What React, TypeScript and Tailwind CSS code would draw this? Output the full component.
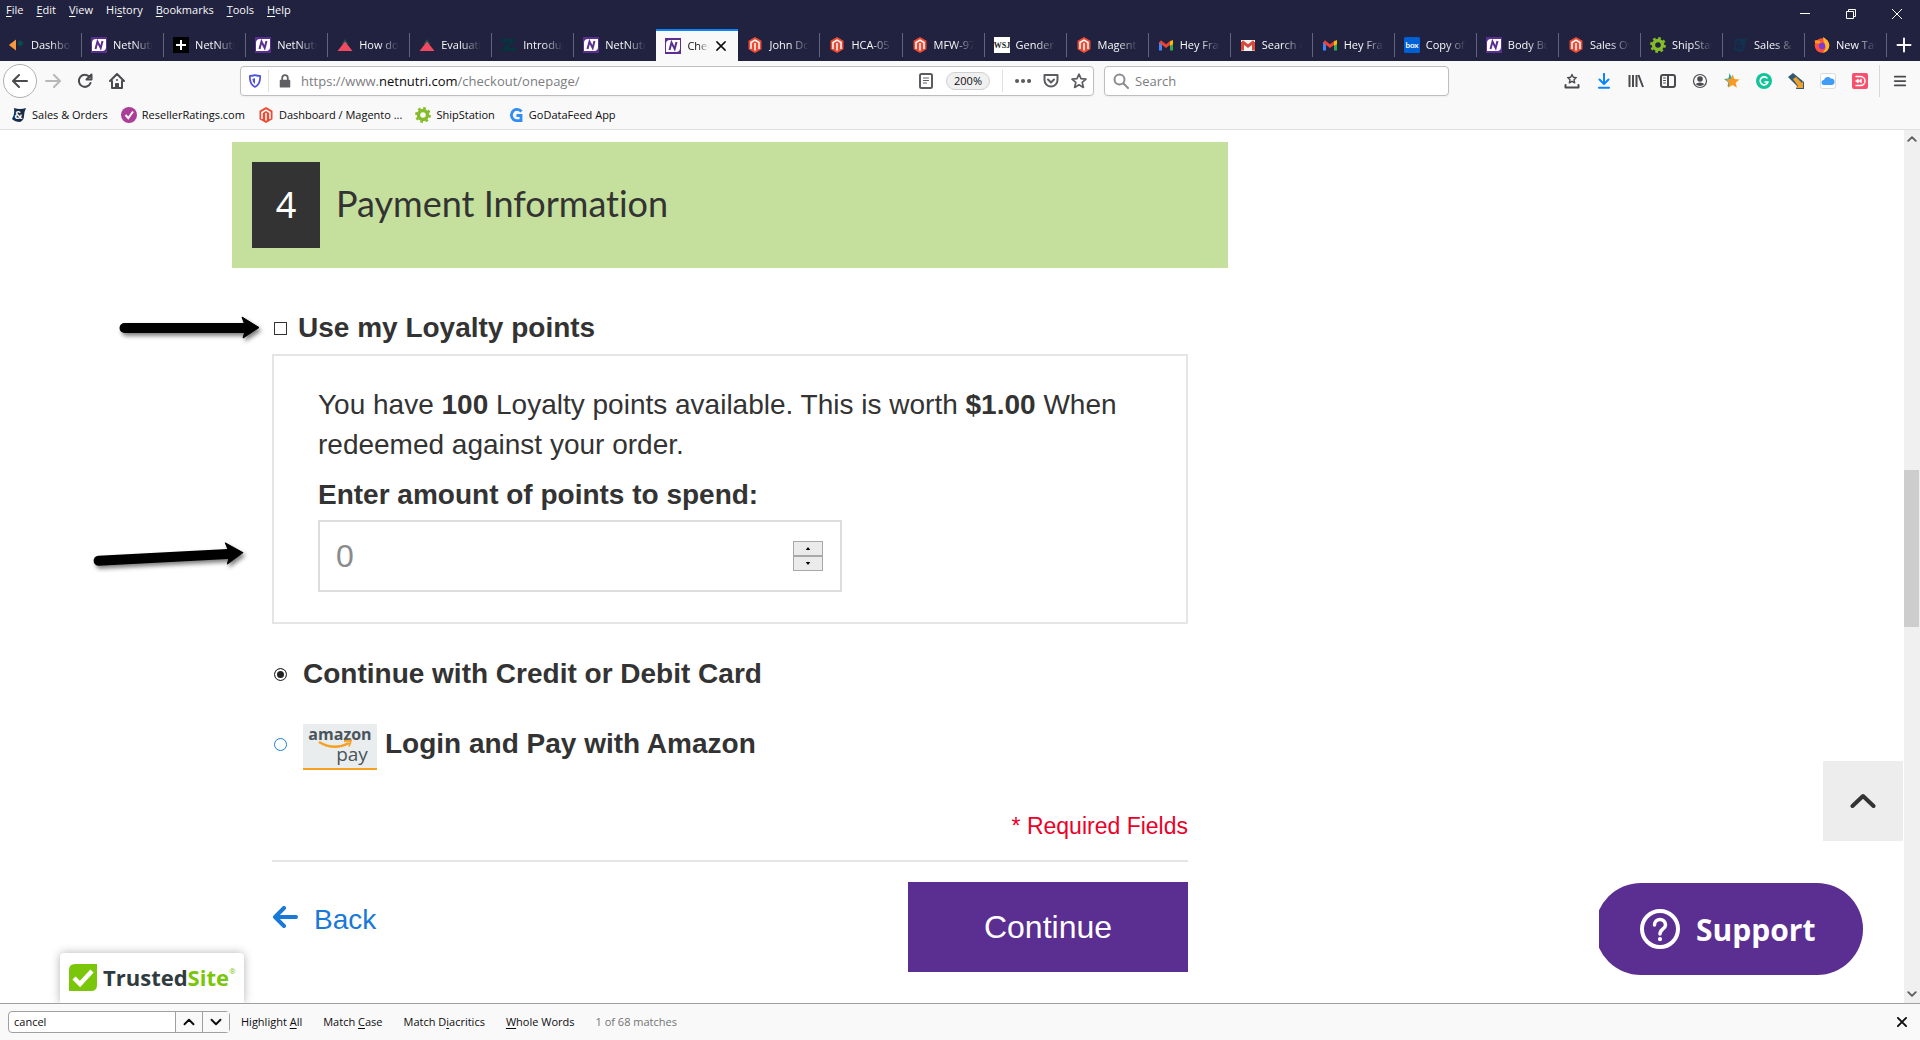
import { useState } from 'react'
import type { ReactNode } from 'react'
import clsx from 'clsx'

type IconName =
  | 'zoho' | 'net' | 'plus' | 'tri' | 'zendesk' | 'magento' | 'wsj' | 'gmail' | 'gmailOld'
  | 'box' | 'gear' | 'amp' | 'ampDim' | 'firefox' | 'check' | 'gdf'

const TABS: { icon: IconName; title: string }[] = [
  { icon: 'zoho', title: 'Dashboard' },
  { icon: 'net', title: 'NetNutri' },
  { icon: 'plus', title: 'NetNutri' },
  { icon: 'net', title: 'NetNutri' },
  { icon: 'tri', title: 'How do I' },
  { icon: 'tri', title: 'Evaluation' },
  { icon: 'zendesk', title: 'Introducing' },
  { icon: 'net', title: 'NetNutri' },
  { icon: 'net', title: 'Checkout' },
  { icon: 'magento', title: 'John Doe' },
  { icon: 'magento', title: 'HCA-05' },
  { icon: 'magento', title: 'MFW-97' },
  { icon: 'wsj', title: 'Gender-' },
  { icon: 'magento', title: 'Magento' },
  { icon: 'gmail', title: 'Hey Frank' },
  { icon: 'gmailOld', title: 'Search results' },
  { icon: 'gmail', title: 'Hey Frank' },
  { icon: 'box', title: 'Copy of' },
  { icon: 'net', title: 'Body Building' },
  { icon: 'magento', title: 'Sales Overview' },
  { icon: 'gear', title: 'ShipStation' },
  { icon: 'ampDim', title: 'Sales & Orders' },
  { icon: 'firefox', title: 'New Tab' },
]
const ACTIVE_TAB = 8

// [text before, access key, text after]
const MENUS = [
  ['', 'F', 'ile'],
  ['', 'E', 'dit'],
  ['', 'V', 'iew'],
  ['Hi', 's', 'tory'],
  ['', 'B', 'ookmarks'],
  ['', 'T', 'ools'],
  ['', 'H', 'elp'],
]

const BOOKMARKS: { icon: IconName; title: string }[] = [
  { icon: 'amp', title: 'Sales & Orders' },
  { icon: 'check', title: 'ResellerRatings.com' },
  { icon: 'magento', title: 'Dashboard / Magento ...' },
  { icon: 'gear', title: 'ShipStation' },
  { icon: 'gdf', title: 'GoDataFeed App' },
]

const FIND_OPTIONS = [
  ['Highlight ', 'A', 'll'],
  ['Match ', 'C', 'ase'],
  ['Match D', 'i', 'acritics'],
  ['', 'W', 'hole Words'],
]

function SiteIcon({ name }: { name: IconName }) {
  return (
    <svg viewBox="0 0 16 16" className="size-4 shrink-0" aria-hidden="true">
      {name === 'zoho' && (
        <>
          <path d="M7 2.500v11L.5 8.600Q0 8 .5 7.400z" fill="#f79a3e" />
          <path d="M9 4.500q2-2 4 0l1.500 2-3 3L9 8z" fill="#0b4a4b" />
        </>
      )}
      {name === 'net' && (
        <>
          <rect width="16" height="16" fill="#5b2e91" />
          <path d="M5 2h10v8q0 4-4 4H1V6q0-4 4-4z" fill="#fff" />
          <path d="M4.500 12L6.500 4.500l3.200 6.500L11.500 4" fill="none" stroke="#5b2e91" strokeWidth="2" />
        </>
      )}
      {name === 'plus' && (
        <>
          <rect width="16" height="16" fill="#000" />
          <path d="M8 3v10M3 8h10" stroke="#fff" strokeWidth="2" />
        </>
      )}
      {name === 'tri' && (
        <>
          <path d="M8 2l3.500 5H4.500z" fill="#1b4b4f" />
          <path d="M8 4.500L15.500 14H.5z" fill="#ef4a5f" />
        </>
      )}
      {name === 'zendesk' && (
        <path d="M0 2h7a3.500 3.500 0 01-7 0zM8 2h7L8 10zM7 6v8H0zM8 14a3.500 3.500 0 017 0z" fill="#03363d" />
      )}
      {name === 'magento' && (
        <>
          <path d="M8 0l6.500 3.800v8.400L8 16l-6.500-3.800V3.800z" fill="#ee4a33" />
          <path d="M4 12V5.500L8 3.200l4 2.300V12M8 6v7.500" fill="none" stroke="#fff" strokeWidth="1.500" />
        </>
      )}
      {name === 'wsj' && (
        <>
          <rect width="16" height="16" fill="#fff" />
          <text x="8" y="11" textAnchor="middle" fontFamily="Liberation Serif" fontWeight="700" fontSize="8" fill="#222">WSJ</text>
        </>
      )}
      {(name === 'gmail' || name === 'gmailOld') && (
        <>
          {name === 'gmailOld' && <rect x="1" y="3" width="14" height="11" fill="#f2f2f2" />}
          <path d="M2.500 13.500V5" stroke={name === 'gmail' ? '#4285f4' : '#d54b3d'} strokeWidth="3" />
          <path d="M13.500 13.500V5" stroke={name === 'gmail' ? '#34a853' : '#d54b3d'} strokeWidth="3" />
          <path d="M2 4.500l6 4.700 6-4.700" fill="none" stroke={name === 'gmail' ? '#ea4335' : '#d54b3d'} strokeWidth="3" />
          {name === 'gmail' && <path d="M12 4.500l3-1.500v4l-3 2z" fill="#fbbc04" />}
        </>
      )}
      {name === 'box' && (
        <>
          <rect width="16" height="16" rx="1.500" fill="#0061d5" />
          <text x="8" y="10.500" textAnchor="middle" fontFamily="Lato" fontWeight="700" fontSize="8" fill="#fff">box</text>
        </>
      )}
      {name === 'gear' && (
        <>
          <circle cx="8" cy="8" r="4.500" fill="none" stroke="#84bd29" strokeWidth="3.400" />
          <circle cx="8" cy="8" r="6.800" fill="none" stroke="#84bd29" strokeWidth="2.200" strokeDasharray="2.670" />
        </>
      )}
      {(name === 'amp' || name === 'ampDim') && (
        <>
          <path d="M3 1q6 2 12 0-2 4-2 8 0 4-4 6-5 0-8-3 3-5 2-11z" fill={name === 'amp' ? '#152d4a' : '#12304f'} />
          <text x="7.500" y="12" textAnchor="middle" fontFamily="Lato" fontWeight="900" fontSize="11" fill={name === 'amp' ? '#fff' : '#20223f'}>&amp;</text>
        </>
      )}
      {name === 'firefox' && (
        <>
          <circle cx="8" cy="8.500" r="7.300" fill="#ff4f3a" />
          <path d="M9 0q6 3 6.300 8.500A7.300 7.300 0 018 15.800q5-3 3-8-2-3-2-7.800z" fill="#ffb52e" />
          <path d="M1 5q3-1 5 1" stroke="#ff9a1f" strokeWidth="3" fill="none" />
          <circle cx="8" cy="9" r="3.200" fill="#7a3bd6" />
        </>
      )}
      {name === 'check' && (
        <>
          <circle cx="8" cy="8" r="8" fill="#ab3f97" />
          <path d="M4.500 8l2.800 3.200L12 4.500" fill="none" stroke="#fff" strokeWidth="2" />
        </>
      )}
      {name === 'gdf' && (
        <path d="M13.500 4.500A5.700 5.700 0 108 13.700h5V8.500H8.500" fill="none" stroke="#2f8df5" strokeWidth="2.800" />
      )}
    </svg>
  )
}

function Glyph({ children, size = 'size-4', className }: { children: ReactNode; size?: string; className?: string }) {
  return (
    <svg
      viewBox="0 0 16 16"
      className={clsx('shrink-0', size, className)}
      fill="none"
      stroke="currentColor"
      strokeWidth="2"
      strokeLinecap="round"
      strokeLinejoin="round"
      aria-hidden="true"
    >
      {children}
    </svg>
  )
}

function AccessText({ parts }: { parts: string[] }) {
  return (
    <>
      {parts[0]}
      <span className="underline underline-offset-2">{parts[1]}</span>
      {parts[2]}
    </>
  )
}

function TitleBar() {
  return (
    <header className="bg-[#20223f] text-[#f9f9fa]">
      <div className="flex h-[29px] items-start justify-between">
        <nav className="flex gap-[13px] pl-1.5 pt-0.5 text-[11px] leading-4">
          {MENUS.map(m => (
            <button key={m[1] + m[2]} type="button"><AccessText parts={m} /></button>
          ))}
        </nav>
        <div className="flex">
          <button type="button" aria-label="Minimize" className="flex h-7 w-[46px] items-center justify-center">
            <svg viewBox="0 0 10 10" className="size-2.5"><path d="M0 4.500h10" stroke="#fff" /></svg>
          </button>
          <button type="button" aria-label="Restore" className="flex h-7 w-[46px] items-center justify-center">
            <svg viewBox="0 0 10 10" className="size-2.5">
              <path d="M.5 2.500h7v7h-7zM2.500 2.500v-2h7v7h-2" fill="none" stroke="#fff" />
            </svg>
          </button>
          <button type="button" aria-label="Close" className="flex h-7 w-[46px] items-center justify-center">
            <svg viewBox="0 0 10 10" className="size-2.5"><path d="M0 0l10 10M10 0L0 10" stroke="#fff" /></svg>
          </button>
        </div>
      </div>
      <div className="flex h-8">
        <div className="flex min-w-0 flex-1">
          {TABS.map((t, i) => {
            const active = i === ACTIVE_TAB
            return (
              <div
                key={i}
                className={clsx(
                  'flex min-w-0 flex-1 basis-0 items-center',
                  active && 'border-t-2 border-[#0a84ff] bg-[#f9f9fa] text-[#0c0c0d]',
                )}
              >
                <div className={clsx('flex min-w-0 flex-1 items-center gap-1.5 pl-[9px]', active ? 'pr-[11px]' : 'pr-2.5')}>
                  <SiteIcon name={t.icon} />
                  <span className="min-w-0 flex-1 overflow-hidden whitespace-nowrap text-[11px] leading-4 [mask-image:linear-gradient(to_right,#000_50%,transparent)]">
                    {t.title}
                  </span>
                  {active && (
                    <button type="button" aria-label="Close tab">
                      <Glyph size="size-3"><path d="M2.500 2.500l11 11M13.500 2.500l-11 11" /></Glyph>
                    </button>
                  )}
                </div>
                {!active && i !== ACTIVE_TAB - 1 && <div className="h-6 w-px bg-[#62647e]" />}
              </div>
            )
          })}
        </div>
        <button type="button" aria-label="New tab" className="flex w-[33px] items-center justify-center">
          <Glyph><path d="M8 1.500v13M1.500 8h13" /></Glyph>
        </button>
      </div>
    </header>
  )
}

function ToolbarButton({ label, children }: { label: string; children: ReactNode }) {
  return (
    <button type="button" aria-label={label} className="flex h-8 w-8 items-center justify-center">
      {children}
    </button>
  )
}

function NavBar() {
  return (
    <div className="flex h-10 items-center bg-[#f9f9fa] text-[#4a4a4f]">
      <div className="flex w-60 items-center pl-[3px]">
        <button type="button" aria-label="Back" className="flex size-[34px] items-center justify-center rounded-full border border-[#b1b1b3] bg-white">
          <Glyph><path d="M15 8H1.500M7 2L1 8l6 6" /></Glyph>
        </button>
        <button type="button" aria-label="Forward" className="flex h-8 w-8 items-center justify-center text-[#b8b8ba]">
          <Glyph><path d="M1 8h13.500M9 2l6 6-6 6" /></Glyph>
        </button>
        <ToolbarButton label="Reload">
          <Glyph><path d="M13.500 10A6 6 0 1112.500 4M9.500 6.500h5v-5z" /></Glyph>
        </ToolbarButton>
        <ToolbarButton label="Home">
          <Glyph><path d="M1 8l7-7 7 7M3 8v7h10V8M7 15v-4h2v4M8 7v.1" /></Glyph>
        </ToolbarButton>
      </div>

      <div className="flex h-[30px] min-w-0 flex-[852] items-center rounded-sm border border-[#bebec0] bg-white shadow-xs">
        <div className="flex h-[22px] w-7 items-center justify-center border-r border-[#e0e0e1]">
          <Glyph size="size-3.5">
            <path d="M8 1.200q3 1 5.800 1Q14.500 11.500 8 14.800 1.500 11.500 2.200 2.200 5 2.200 8 1.200z" stroke="#4f52e0" />
            <path d="M8 4.500v7q-3-2-3-5.800z" fill="#4f52e0" stroke="none" />
          </Glyph>
        </div>
        <div className="flex w-8 items-center justify-center text-[#606064]">
          <Glyph size="size-3.5">
            <rect x="3" y="7.500" width="10" height="7" fill="currentColor" />
            <path d="M4.800 7V4.500a3.200 3.200 0 016.400 0V7" />
          </Glyph>
        </div>
        <div className="min-w-0 flex-1 truncate text-[13px] leading-5 text-[#7c7c80]">
          https://www.<span className="text-[#0c0c0d]">netnutri.com</span>/checkout/onepage/
        </div>
        <button type="button" aria-label="Reader view" className="text-[#5c5c60]">
          <Glyph>
            <rect x="2" y="1" width="12" height="14" rx="1.500" />
            <path d="M5.500 5h5M5.500 7.500h5M5.500 10h3" strokeWidth="1.200" />
          </Glyph>
        </button>
        <button type="button" className="mx-3 h-[18px] w-11 rounded-full border border-[#d0d0d2] bg-[#f0f0f1] text-[11px] leading-4 text-[#0c0c0d]">
          200%
        </button>
        <div className="h-[22px] w-px bg-[#e0e0e1]" />
        <div className="flex items-center gap-3 pl-3 pr-1.5 text-[#5c5c60]">
          <button type="button" aria-label="Page actions">
            <Glyph><path d="M2 8h.1M8 8h.1M14 8h.1" strokeWidth="4" /></Glyph>
          </button>
          <button type="button" aria-label="Save to Pocket">
            <Glyph><path d="M1.500 2h13v5a6.500 6.500 0 01-13 0zM5 6.500l3 3 3-3" /></Glyph>
          </button>
          <button type="button" aria-label="Bookmark this page">
            <Glyph><path d="M8 1.200l2 4.500 5 .5-3.800 3.200 1.200 5L8 11.800l-4.400 2.600 1.200-5L1 6.200l5-.5z" strokeWidth="1.700" /></Glyph>
          </button>
        </div>
      </div>

      <label className="ml-2.5 flex h-[30px] min-w-0 flex-[335] items-center gap-1.5 rounded-sm border border-[#bebec0] bg-white pl-2 shadow-xs">
        <Glyph className="text-[#8c8c90]"><circle cx="6.500" cy="6.500" r="5" /><path d="M10.500 10.500L15 15" /></Glyph>
        <input type="text" aria-label="Search the web" placeholder="Search" className="min-w-0 flex-1 text-[13px] leading-5 outline-none placeholder:text-[#7c7c80]" />
      </label>

      <div className="flex w-[471px] shrink-0 items-center justify-end">
        <ToolbarButton label="Bookmarks menu">
          <Glyph><path d="M8 1.500l1.300 2.800 3 .3L10 6.800l.7 3L8 8.300 5.300 9.800l.7-3-2.300-2.200 3-.3z" strokeWidth="1.400" /><path d="M1.500 12v2.500h13V12" /></Glyph>
        </ToolbarButton>
        <ToolbarButton label="Downloads">
          <Glyph className="text-[#0a84ff]"><path d="M8 .8v10M3.500 6.500L8 11l4.500-4.500M3 14.800h10" /></Glyph>
        </ToolbarButton>
        <ToolbarButton label="Library">
          <Glyph><path d="M1.500 2v12M5 2v12M8.500 2v12M10.500 2l4.500 12" strokeLinecap="butt" /></Glyph>
        </ToolbarButton>
        <ToolbarButton label="Sidebars">
          <Glyph><rect x="1" y="2" width="14" height="12" rx="2" /><path d="M8 2v12" /><path d="M3.500 5h2M3.500 7.500h2M3.500 10h2" strokeWidth="1" /></Glyph>
        </ToolbarButton>
        <ToolbarButton label="Account">
          <Glyph><circle cx="8" cy="8" r="6.500" strokeWidth="1.200" /><circle cx="8" cy="6" r="2.800" fill="currentColor" stroke="none" /><path d="M3.500 11q4.500-3 9 0-4.500 4-9 0z" fill="currentColor" stroke="none" /></Glyph>
        </ToolbarButton>
        <ToolbarButton label="Favorites">
          <Glyph>
            <path d="M5.500 0l2 4.500 3 5-6 4.500-1-1 1-3.500L0 6l4.500-.5z" fill="#2aa5a0" stroke="none" />
            <path d="M8.500 1.500l2 4.500 5 .5-3.800 3.200 1.200 5-4.400-2.600-4.400 2.600 1.200-5L1.500 6.500l5-.5z" fill="#fa9a25" stroke="none" />
          </Glyph>
        </ToolbarButton>
        <ToolbarButton label="Grammarly">
          <Glyph><circle cx="8" cy="8" r="8" fill="#15c39a" stroke="none" /><path d="M11 5A4 4 0 1012 9H9" stroke="#fff" strokeWidth="1.600" /></Glyph>
        </ToolbarButton>
        <ToolbarButton label="Tags">
          <Glyph>
            <path d="M0 4l5-4 11 9v7H8l1-3z" fill="#2f5a70" stroke="none" />
            <path d="M5 6l3-2 6 6 1-2v7H8l2-2z" fill="#f0a02d" stroke="none" />
          </Glyph>
        </ToolbarButton>
        <ToolbarButton label="Cloud">
          <Glyph><rect x=".5" y=".5" width="15" height="15" rx="2" fill="#fff" stroke="#dcdce0" strokeWidth="1" /><path d="M4 12a2.500 2.500 0 010-5 4 4 0 017-1.500A3.300 3.300 0 0112 12z" fill="#3f9cf7" stroke="none" /></Glyph>
        </ToolbarButton>
        <ToolbarButton label="Recorder">
          <Glyph><rect width="16" height="16" rx="2" fill="#f9506e" stroke="none" /><path d="M4 3.500h4.500a4.500 4.500 0 010 9H4M4 8h5M6 6.500L4.500 8 6 9.500M9 6.500v3" stroke="#fff" strokeWidth="1.500" /></Glyph>
        </ToolbarButton>
        <div className="ml-[3px] h-8 w-px bg-[#d8d8da]" />
        <button type="button" aria-label="Open menu" className="flex h-8 w-10 items-center justify-center">
          <Glyph size="size-3.5"><path d="M2 3h12M2 8h12M2 13h12" /></Glyph>
        </button>
      </div>
    </div>
  )
}

function BookmarksBar() {
  return (
    <div className="flex h-[29px] items-center gap-[13px] border-b border-[#e0e0e1] bg-[#f9f9fa] pl-[11px] text-[11px] leading-4 text-[#0c0c0d]">
      {BOOKMARKS.map(b => (
        <a key={b.title} href="#" className="flex items-center gap-[5px]">
          <SiteIcon name={b.icon} />
          {b.title}
        </a>
      ))}
    </div>
  )
}

function PointerArrow({ className, length, tilt }: { className: string; length: number; tilt: number }) {
  return (
    <svg
      width={length}
      height="36"
      className={clsx('absolute overflow-visible drop-shadow-[2px_3px_2px_rgba(0,0,0,0.5)]', className)}
      aria-hidden="true"
    >
      <g transform={`rotate(${tilt} ${length / 2} 18)`}>
        <path d={`M5.500 18H${length - 16}`} stroke="#000" strokeWidth="10" strokeLinecap="round" />
        <path d={`M${length - 18} 7l17 10.500L${length - 17} 28l3-10z`} fill="#000" stroke="#000" strokeLinejoin="round" />
      </g>
    </svg>
  )
}

function LoyaltyBox() {
  const [points, setPoints] = useState('')
  const step = (n: number) => setPoints(p => String(Math.min(100, Math.max(0, Number(p) + n))))

  return (
    <div className="mt-1.5 border-2 border-[#e5e5e5] px-11 pb-[30px] pt-[29px]">
      <p className="leading-10">
        You have <b>100</b> Loyalty points available. This is worth <b>$1.00</b> When redeemed against your order.
      </p>
      <label htmlFor="points" className="mt-2.5 block font-bold leading-10">Enter amount of points to spend:</label>
      <div className="mt-[5px] flex h-[72px] max-w-[524px] items-center border-2 border-[#ddd] pl-4 pr-[17px]">
        <input
          id="points"
          type="number"
          placeholder="0"
          value={points}
          onChange={e => setPoints(e.target.value)}
          className="min-w-0 flex-1 text-[32px] leading-10 outline-none [appearance:textfield] placeholder:text-[#8b8b8b]"
        />
        <div className="flex h-[30px] w-[30px] flex-col">
          <button type="button" aria-label="More points" onClick={() => step(1)} className="flex flex-1 items-center justify-center border border-[#a8a8a8] bg-[#ebebeb]">
            <svg viewBox="0 0 6 4" className="h-[3px] w-1.5"><path d="M3 0l3 4H0z" /></svg>
          </button>
          <button type="button" aria-label="Fewer points" onClick={() => step(-1)} className="flex flex-1 items-center justify-center border border-[#a8a8a8] bg-[#ebebeb]">
            <svg viewBox="0 0 6 4" className="h-[3px] w-1.5"><path d="M3 4L0 0h6z" /></svg>
          </button>
        </div>
      </div>
    </div>
  )
}

function AmazonPayBadge() {
  return (
    <svg viewBox="0 0 74 46" className="h-[46px] w-[74px] shrink-0" role="img" aria-label="Amazon Pay">
      <rect width="74" height="46" fill="#e9eded" />
      <rect y="44" width="74" height="2" fill="#f7a021" />
      <text x="37" y="16" textAnchor="middle" fontFamily="Open Sans" fontWeight="700" fontSize="16" fill="#4a545c">amazon</text>
      <path d="M16 18q15 9 30 1" fill="none" stroke="#f7a021" strokeWidth="2.500" />
      <path d="M41 17l7-.5-2 6" fill="none" stroke="#f7a021" strokeWidth="1.800" />
      <text x="49" y="37" textAnchor="middle" fontFamily="Open Sans" fontWeight="500" fontSize="19" fill="#4a545c">pay</text>
    </svg>
  )
}

const RADIO_CLASS =
  'size-[13px] shrink-0 appearance-none rounded-full border border-[#1a80d9] bg-white checked:border-[#333] checked:bg-[#222] checked:shadow-[inset_0_0_0_2px_#fff]'

function Checkout() {
  const [method, setMethod] = useState('card')

  return (
    <main className="relative min-w-0 flex-1 overflow-hidden bg-white pt-3 font-['Liberation_Sans',Arial,sans-serif] text-[28px] text-[#333]">
      <section className="ml-[232px] max-w-[996px]">
        <div className="flex h-[126px] items-center gap-4 bg-[#c5df9c] px-5">
          <span className="flex h-[86px] w-[68px] items-center justify-center bg-[#333] font-['Noto_Sans',sans-serif] text-[36px] text-white">4</span>
          <h2 className="pb-1 font-['Lato',sans-serif] text-[36px] leading-10 [font-variant-ligatures:none]">Payment Information</h2>
        </div>

        <form className="px-10 pt-10" onSubmit={e => e.preventDefault()}>
          <label className="flex items-center gap-[11px] pl-0.5 font-bold leading-10">
            <input type="checkbox" className="size-[13px] appearance-none border border-[#333] bg-white checked:bg-[#333]" />
            Use my Loyalty points
          </label>

          <LoyaltyBox />

          <label className="mt-[30px] flex items-center gap-4 pl-0.5 font-bold leading-10">
            <input type="radio" name="method" checked={method === 'card'} onChange={() => setMethod('card')} className={RADIO_CLASS} />
            Continue with Credit or Debit Card
          </label>
          <label className="mt-[30px] flex items-start pl-0.5 font-bold leading-10">
            <span className="flex h-10 items-center">
              <input type="radio" name="method" checked={method === 'amazon'} onChange={() => setMethod('amazon')} className={RADIO_CLASS} />
            </span>
            <span className="flex gap-2 pl-4">
              <AmazonPayBadge />
              Login and Pay with Amazon
            </span>
          </label>

          <p className="mt-10 text-right text-[23px] leading-8 text-[#eb0028]">* Required Fields</p>

          <div className="mt-[18px] flex items-start justify-between border-t-2 border-[#e5e5e5] pt-5">
            <a href="#" className="mt-[18px] flex items-start gap-4 leading-10 text-[#1979d6]">
              <svg viewBox="0 0 26 22" className="mt-1.5 h-[22px] w-[26px]" fill="none" stroke="currentColor" strokeWidth="4" strokeLinecap="round" strokeLinejoin="round" aria-hidden="true">
                <path d="M24 11H4M12 2L3 11l9 9" />
              </svg>
              Back
            </a>
            <button type="submit" className="h-[90px] w-[280px] bg-[#5b2e91] text-[32px] text-white">Continue</button>
          </div>
        </form>
      </section>

      <PointerArrow className="left-[119px] top-[180px]" length={141} tilt={0} />
      <PointerArrow className="left-[93px] top-[409px]" length={151} tilt={-3} />

      <a href="#" className="absolute bottom-0 left-[60px] flex h-[50px] w-[184px] items-center gap-1.5 rounded-t bg-white pb-0.5 pl-[9px] shadow-[0_0_10px_rgba(0,0,0,0.3)]">
        <svg viewBox="0 0 28 27" className="h-[27px] w-7 shrink-0" aria-hidden="true">
          <path d="M6 0h22v21q0 6-6 6H0V6q0-6 6-6z" fill="#7ac60a" />
          <path d="M5 14l6 6L23 7" fill="none" stroke="#fff" strokeWidth="4.500" />
        </svg>
        <span className="flex font-['Open_Sans',sans-serif] text-[22px] font-bold leading-8 text-[#2f3b3f]">
          Trusted<span className="text-[#7ac60a]">Site</span>
          <span className="text-[8px] font-normal leading-5 text-[#7ac60a]">®</span>
        </span>
      </a>

      <button type="button" aria-label="Scroll to top" className="absolute bottom-[162px] right-px flex size-20 items-center justify-center bg-[#ededed]">
        <svg viewBox="0 0 26 16" className="h-4 w-[26px]" fill="none" stroke="#333" strokeWidth="4" strokeLinecap="round" strokeLinejoin="round">
          <path d="M2.500 13L13 3l10.500 10" />
        </svg>
      </button>
      <div className="absolute bottom-7 right-[41px] overflow-hidden">
        <button type="button" className="-ml-1 flex h-[92px] w-[268px] items-center gap-4 rounded-full bg-[#5b2e91] pl-[45px] font-['Open_Sans',sans-serif] text-[30px] font-bold text-white">
          <svg viewBox="0 0 40 40" className="size-10" fill="none" stroke="#fff" strokeLinecap="round" aria-hidden="true">
            <circle cx="20" cy="20" r="18" strokeWidth="4" />
            <path d="M14.500 16a5.500 5.500 0 1111 0c0 4-5.500 4-5.500 9" strokeWidth="3.500" />
            <path d="M20 30v.2" strokeWidth="4" />
          </svg>
          Support
        </button>
      </div>
    </main>
  )
}

function ScrollTrack() {
  return (
    <div className="flex w-4 shrink-0 flex-col items-center justify-between bg-[#f0f0f0] py-1 text-[#606060]">
      <Glyph size="size-2.5"><path d="M2 11l6-6 6 6" strokeWidth="3" /></Glyph>
      <div className="flex w-full flex-1 flex-col">
        <div className="flex-[326]" />
        <div className="mr-px flex-[157] bg-[#cdcdcd]" />
        <div className="flex-[362]" />
      </div>
      <Glyph size="size-2.5"><path d="M2 5l6 6 6-6" strokeWidth="3" /></Glyph>
    </div>
  )
}

function FindBar() {
  return (
    <footer className="flex h-[37px] items-center border-t border-[#a0a0a2] bg-[#f9f9fa] pl-2 pr-3 text-[11px] leading-4 text-[#0c0c0d]">
      <div className="flex h-[22px] items-stretch rounded-sm border border-[#a0a0a2] bg-white">
        <input type="text" aria-label="Find in page" defaultValue="cancel" className="w-[166px] pl-[5px] outline-none" />
        <button type="button" aria-label="Previous match" className="flex w-[27px] items-center justify-center border-l border-[#a0a0a2] bg-[#f9f9fa]">
          <Glyph size="size-3"><path d="M2 11l6-6 6 6" strokeWidth="2.500" /></Glyph>
        </button>
        <button type="button" aria-label="Next match" className="flex w-[27px] items-center justify-center border-l border-[#a0a0a2] bg-[#f9f9fa]">
          <Glyph size="size-3"><path d="M2 5l6 6 6-6" strokeWidth="2.500" /></Glyph>
        </button>
      </div>
      <div className="ml-[11px] flex gap-[21px]">
        {FIND_OPTIONS.map(o => (
          <button key={o.join('')} type="button"><AccessText parts={o} /></button>
        ))}
        <span className="text-[#737373]">1 of 68 matches</span>
      </div>
      <button type="button" aria-label="Close find bar" className="ml-auto">
        <Glyph size="size-3"><path d="M2.500 2.500l11 11M13.500 2.500l-11 11" strokeWidth="2.500" /></Glyph>
      </button>
    </footer>
  )
}

export default function App() {
  return (
    <div className="flex min-h-screen flex-col font-['Open_Sans','Noto_Sans',sans-serif]">
      <TitleBar />
      <NavBar />
      <BookmarksBar />
      <div className="flex flex-1">
        <Checkout />
        <ScrollTrack />
      </div>
      <FindBar />
    </div>
  )
}
